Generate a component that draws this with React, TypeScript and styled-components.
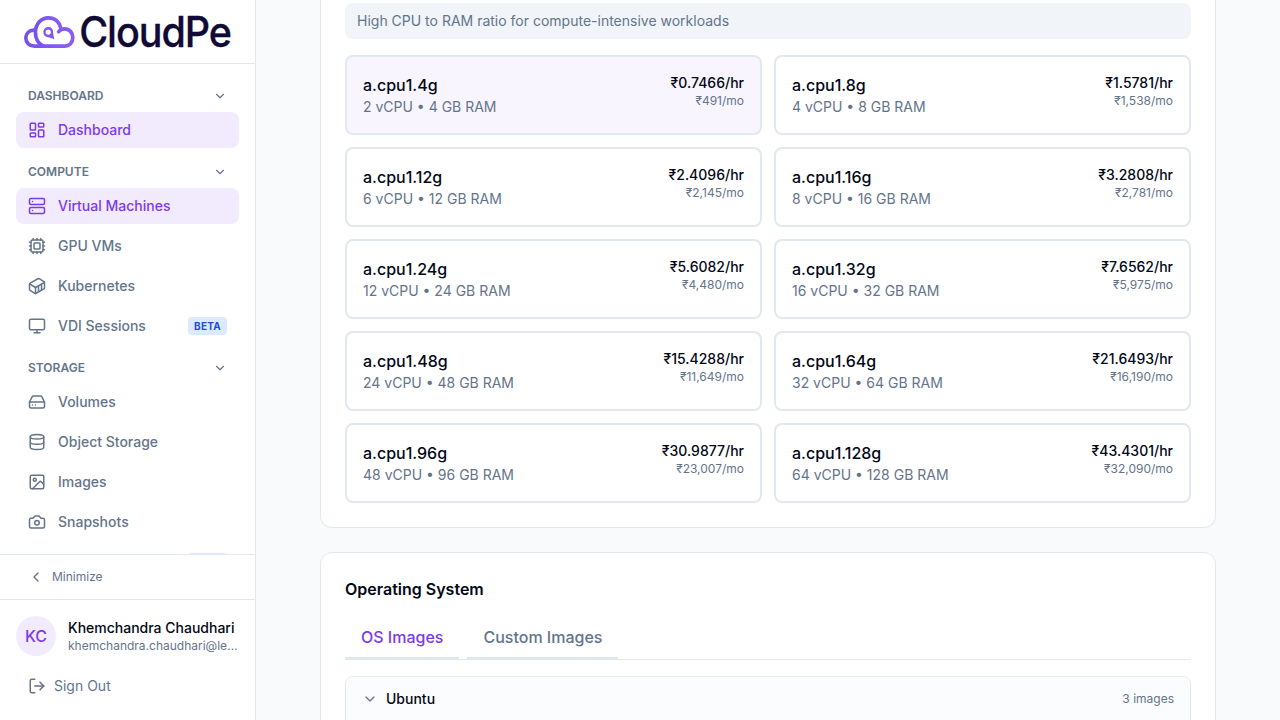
import React from "react";
import styled, { createGlobalStyle } from "styled-components";
import {
  Camera,
  ChevronDown,
  ChevronLeft,
  Container,
  Cpu,
  Database,
  HardDrive,
  Image as ImageIcon,
  LayoutDashboard,
  LogOut,
  Monitor,
  Server,
  type LucideIcon,
} from "lucide-react";

const color = {
  page: "#f9fafc",
  border: "#e2e8f0",
  text: "#020817",
  muted: "#64748b",
  primary: "#7c3aed",
  primarySoft: "#f2ebfd",
  primaryFaint: "#f8f5fe",
};

const GlobalStyle = createGlobalStyle`
  *, *::before, *::after { box-sizing: border-box; }
  body {
    margin: 0;
    overflow: hidden;
    background: ${color.page};
    color: ${color.text};
    font-family: Inter, "Liberation Sans", sans-serif;
    font-size: 16px;
    line-height: 24px;
  }
  h2, p { margin: 0; }
  button { font: inherit; color: inherit; background: none; border: 0; padding: 0; text-align: left; }
`;

const Shell = styled.div`
  display: flex;
  height: 720px;
  overflow: hidden;
`;

const Sidebar = styled.aside`
  display: flex;
  flex-direction: column;
  flex: none;
  width: 256px;
  background: #fff;
  border-right: 1px solid ${color.border};
`;

const Brand = styled.div`
  flex: none;
  height: 64px;
  padding: 4px 0 0 20px;
  border-bottom: 1px solid ${color.border};
  svg { display: block; }
`;

const Nav = styled.nav`
  flex: 1;
  min-height: 0;
  padding: 16px;
  overflow: hidden;
  display: flex;
  flex-direction: column;
  gap: 8px;
`;

const SectionHeader = styled.button`
  display: flex;
  align-items: center;
  justify-content: space-between;
  width: 100%;
  height: 32px;
  padding: 0 12px;
  font-size: 12px;
  line-height: 16px;
  font-weight: 600;
  text-transform: uppercase;
  color: ${color.muted};
`;

const NavList = styled.div`
  display: flex;
  flex-direction: column;
  gap: 4px;
`;

const NavItem = styled.a<{ $active?: boolean }>`
  display: flex;
  align-items: center;
  gap: 12px;
  height: 36px;
  padding: 0 12px;
  border-radius: 8px;
  font-size: 14px;
  line-height: 20px;
  font-weight: 500;
  color: ${(p) => (p.$active ? color.primary : color.muted)};
  background: ${(p) => (p.$active ? color.primarySoft : "transparent")};
`;

const Badge = styled.span`
  margin-left: auto;
  padding: 1.5px 6px;
  border-radius: 4px;
  background: #dbeafe;
  color: #1d4ed8;
  font-size: 10px;
  line-height: 15px;
  font-weight: 700;
  letter-spacing: 0.025em;
`;

const MinimizeBar = styled.div`
  flex: none;
  height: 45px;
  padding: 0 28px;
  border-top: 1px solid ${color.border};
  display: flex;
  align-items: center;
`;

const MinimizeButton = styled.button`
  display: flex;
  align-items: center;
  gap: 8px;
  font-size: 12px;
  line-height: 16px;
  color: ${color.muted};
`;

const Account = styled.div`
  flex: none;
  height: 121px;
  padding: 16px;
  border-top: 1px solid ${color.border};
`;

const Profile = styled.div`
  display: flex;
  align-items: center;
  gap: 12px;
  margin-bottom: 12px;
`;

const Avatar = styled.div`
  display: flex;
  align-items: center;
  justify-content: center;
  flex: none;
  width: 40px;
  height: 40px;
  border-radius: 50%;
  background: ${color.primarySoft};
  color: ${color.primary};
  font-weight: 500;
`;

const ProfileText = styled.div`
  flex: 1;
  min-width: 0;
`;

const ProfileName = styled.p`
  font-size: 14px;
  line-height: 20px;
  font-weight: 500;
  white-space: nowrap;
`;

const ProfileEmail = styled.p`
  font-size: 12px;
  line-height: 16px;
  color: ${color.muted};
  overflow: hidden;
  text-overflow: ellipsis;
  white-space: nowrap;
`;

const SignOut = styled.button`
  display: flex;
  align-items: center;
  gap: 8px;
  height: 36px;
  padding: 0 12px;
  font-size: 14px;
  line-height: 20px;
  color: ${color.muted};
`;

const Main = styled.main`
  flex: 1;
  min-width: 0;
  padding: 0 64px;
  overflow: hidden;
  display: flex;
  flex-direction: column;
  gap: 24px;
`;

const Panel = styled.section<{ $continued?: boolean }>`
  flex: none;
  background: #fff;
  border: 1px solid ${color.border};
  border-radius: ${(p) => (p.$continued ? "0 0 12px 12px" : "12px")};
  border-top-width: ${(p) => (p.$continued ? 0 : "1px")};
  padding: ${(p) => (p.$continued ? "3px 24px 24px" : "24px")};
`;

const Note = styled.p`
  padding: 8px 12px;
  margin-bottom: 16px;
  border-radius: 8px;
  background: #f1f5f9;
  color: ${color.muted};
  font-size: 14px;
  line-height: 20px;
`;

const PlanGrid = styled.div`
  display: grid;
  grid-template-columns: 1fr 1fr;
  gap: 12px;
`;

const PlanCard = styled.button<{ $selected?: boolean }>`
  display: flex;
  justify-content: space-between;
  align-items: flex-start;
  padding: 16px;
  border: 2px solid ${color.border};
  border-radius: 8px;
  background: ${(p) => (p.$selected ? color.primaryFaint : "#fff")};
`;

const PlanName = styled.p`
  font-weight: 500;
`;

const PlanSpec = styled.p`
  font-size: 14px;
  line-height: 20px;
  color: ${color.muted};
`;

const PlanPrice = styled.div`
  text-align: right;
`;

const Hourly = styled.p`
  font-size: 14px;
  line-height: 20px;
  font-weight: 500;
`;

const Monthly = styled.p`
  font-size: 12px;
  line-height: 16px;
  color: ${color.muted};
`;

const PanelTitle = styled.h2`
  font-size: 16px;
  line-height: 24px;
  font-weight: 600;
  margin-bottom: 16px;
`;

const Tabs = styled.div`
  display: flex;
  gap: 8px;
  margin-bottom: 16px;
  border-bottom: 1px solid ${color.border};
`;

const Tab = styled.button<{ $active?: boolean }>`
  padding: 8px 16px;
  border-bottom: 2px solid ${color.border};
  font-weight: 500;
  color: ${(p) => (p.$active ? color.primary : color.muted)};
`;

const Group = styled.div`
  border: 1px solid ${color.border};
  border-radius: 8px;
  overflow: hidden;
`;

const GroupHeader = styled.button`
  display: flex;
  align-items: center;
  gap: 8px;
  width: 100%;
  height: 60px;
  padding: 12px 16px 28px;
  background: #fbfcfd;
  font-size: 14px;
  line-height: 20px;
  font-weight: 500;
  svg { color: ${color.muted}; }
`;

const GroupCount = styled.span`
  margin-left: auto;
  font-size: 12px;
  line-height: 16px;
  font-weight: 400;
  color: ${color.muted};
`;

type NavEntry = { label: string; icon: LucideIcon; active?: boolean; beta?: boolean };

const sections: { title: string; items: NavEntry[] }[] = [
  { title: "Dashboard", items: [{ label: "Dashboard", icon: LayoutDashboard, active: true }] },
  {
    title: "Compute",
    items: [
      { label: "Virtual Machines", icon: Server, active: true },
      { label: "GPU VMs", icon: Cpu },
      { label: "Kubernetes", icon: Container },
      { label: "VDI Sessions", icon: Monitor, beta: true },
    ],
  },
  {
    title: "Storage",
    items: [
      { label: "Volumes", icon: HardDrive },
      { label: "Object Storage", icon: Database },
      { label: "Images", icon: ImageIcon },
      { label: "Snapshots", icon: Camera },
      { label: "Backups", icon: HardDrive, beta: true },
    ],
  },
];

const plans = [
  ["a.cpu1.4g", "2 vCPU • 4 GB RAM", "₹0.7466/hr", "₹491/mo"],
  ["a.cpu1.8g", "4 vCPU • 8 GB RAM", "₹1.5781/hr", "₹1,538/mo"],
  ["a.cpu1.12g", "6 vCPU • 12 GB RAM", "₹2.4096/hr", "₹2,145/mo"],
  ["a.cpu1.16g", "8 vCPU • 16 GB RAM", "₹3.2808/hr", "₹2,781/mo"],
  ["a.cpu1.24g", "12 vCPU • 24 GB RAM", "₹5.6082/hr", "₹4,480/mo"],
  ["a.cpu1.32g", "16 vCPU • 32 GB RAM", "₹7.6562/hr", "₹5,975/mo"],
  ["a.cpu1.48g", "24 vCPU • 48 GB RAM", "₹15.4288/hr", "₹11,649/mo"],
  ["a.cpu1.64g", "32 vCPU • 64 GB RAM", "₹21.6493/hr", "₹16,190/mo"],
  ["a.cpu1.96g", "48 vCPU • 96 GB RAM", "₹30.9877/hr", "₹23,007/mo"],
  ["a.cpu1.128g", "64 vCPU • 128 GB RAM", "₹43.4301/hr", "₹32,090/mo"],
];

function Logo() {
  return (
    <svg width="232" height="56" viewBox="20 4 232 56" role="img" aria-label="CloudPe">
      <defs>
        <linearGradient id="cloud" x1="0" y1="0" x2="1" y2="0">
          <stop offset="0" stopColor="#7a52e8" />
          <stop offset="1" stopColor="#8a5cf6" />
        </linearGradient>
      </defs>
      <g fill="none" stroke="url(#cloud)" strokeWidth="3.7" strokeLinecap="round" strokeLinejoin="round">
        <path d="M58.7 31.7C60.2 29.8 62.3 28.9 64.6 28.9C69.4 28.9 72.8 32.6 72.8 37.5C72.8 42.5 69.3 46.2 64.5 46.2H34.4C29.4 46.2 25.8 42.7 25.8 38.1C25.8 33.6 29.1 30.3 33.7 30.1" />
        <path d="M43 46C37.9 43.1 35.4 38.2 35.4 32.4C35.4 24 41 17.8 48.4 17.8C54.6 17.8 59.3 21.6 60.8 28.2" />
      </g>
      <path
        fill="#8257f0"
        fillRule="evenodd"
        d="M48.2 27C51.2 27 53.1 29.1 53.1 32C53.1 34.3 53.8 36.3 54.4 39.2C51.6 38.3 50 37.4 48 37.2C45.2 36.9 43.4 34.9 43.4 32.2C43.4 29.2 45.5 27 48.2 27ZM48.2 29.5A2.6 2.6 0 1 0 48.2 34.7A2.6 2.6 0 1 0 48.2 29.5Z"
      />
      <text
        transform="translate(79.2 47.3) scale(0.93 1)"
        x="0"
        y="0"
        fill="#100a35"
        stroke="#100a35"
        strokeWidth="0.3"
        fontFamily="Inter, sans-serif"
        fontSize="42.5"
        fontWeight="500"
        letterSpacing="-1.15"
      >
        CloudPe
      </text>
    </svg>
  );
}

export default function App() {
  return (
    <>
      <GlobalStyle />
      <Shell>
        <Sidebar>
          <Brand>
            <Logo />
          </Brand>
          <Nav>
            {sections.map((section) => (
              <div key={section.title}>
                <SectionHeader>
                  {section.title}
                  <ChevronDown size={14} />
                </SectionHeader>
                <NavList>
                  {section.items.map(({ label, icon: Icon, active, beta }) => (
                    <NavItem key={label} $active={active}>
                      <Icon size={18} />
                      {label}
                      {beta && <Badge>BETA</Badge>}
                    </NavItem>
                  ))}
                </NavList>
              </div>
            ))}
          </Nav>
          <MinimizeBar>
            <MinimizeButton>
              <ChevronLeft size={16} />
              Minimize
            </MinimizeButton>
          </MinimizeBar>
          <Account>
            <Profile>
              <Avatar>KC</Avatar>
              <ProfileText>
                <ProfileName>Khemchandra Chaudhari</ProfileName>
                <ProfileEmail>khemchandra.chaudhari@leapswitch.com</ProfileEmail>
              </ProfileText>
            </Profile>
            <SignOut>
              <LogOut size={18} />
              Sign Out
            </SignOut>
          </Account>
        </Sidebar>
        <Main>
          <Panel $continued>
            <Note>High CPU to RAM ratio for compute-intensive workloads</Note>
            <PlanGrid>
              {plans.map(([name, spec, hourly, monthly], i) => (
                <PlanCard key={name} $selected={i === 0}>
                  <div>
                    <PlanName>{name}</PlanName>
                    <PlanSpec>{spec}</PlanSpec>
                  </div>
                  <PlanPrice>
                    <Hourly>{hourly}</Hourly>
                    <Monthly>{monthly}</Monthly>
                  </PlanPrice>
                </PlanCard>
              ))}
            </PlanGrid>
          </Panel>
          <Panel>
            <PanelTitle>Operating System</PanelTitle>
            <Tabs>
              <Tab $active>OS Images</Tab>
              <Tab>Custom Images</Tab>
            </Tabs>
            <Group>
              <GroupHeader>
                <ChevronDown size={16} />
                Ubuntu
                <GroupCount>3 images</GroupCount>
              </GroupHeader>
            </Group>
          </Panel>
        </Main>
      </Shell>
    </>
  );
}
